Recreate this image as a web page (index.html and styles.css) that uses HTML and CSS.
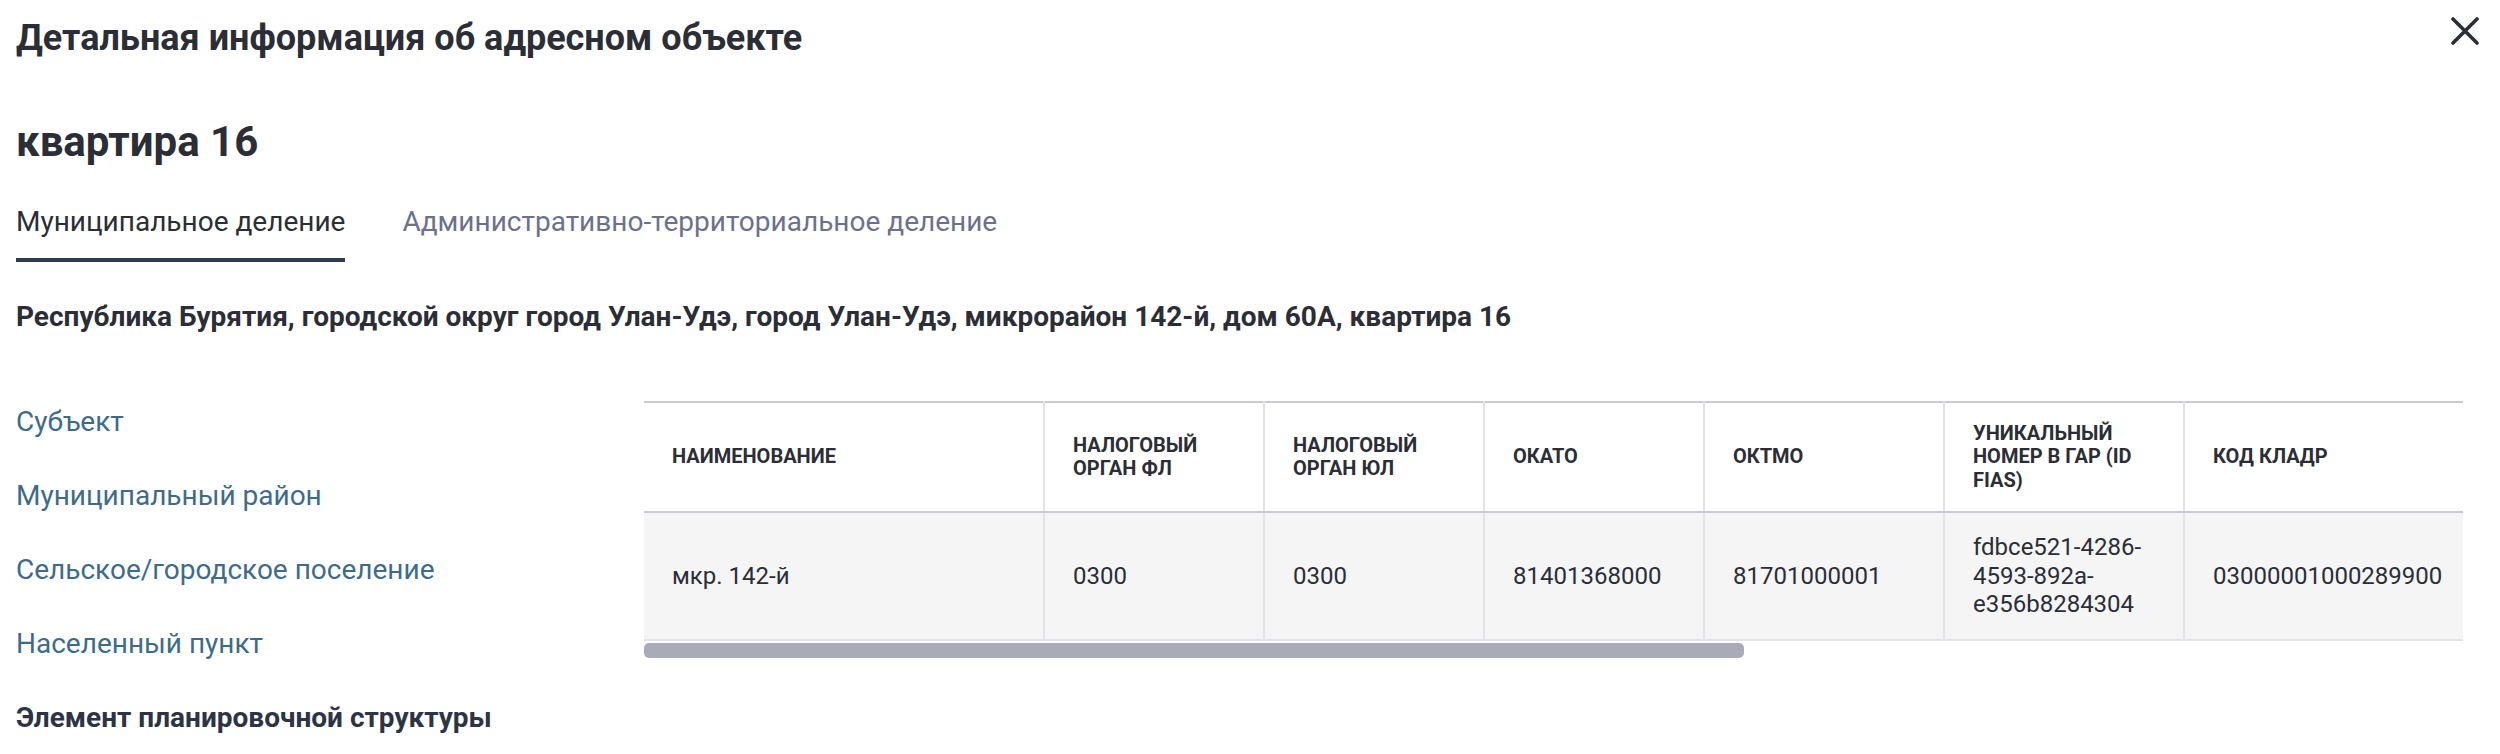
FILE: index.html
```html
<!DOCTYPE html>
<html lang="ru">
<head>
<meta charset="utf-8">
<title>Детальная информация об адресном объекте</title>
<link rel="stylesheet" href="styles.css">
</head>
<body>
<div class="page">
  <header class="header">
    <h1 class="title">Детальная информация об адресном объекте</h1>
    <button class="close" type="button" aria-label="Закрыть">
      <svg width="28" height="28" viewBox="0 0 28 28"><path d="M2 2 L26 26 M26 2 L2 26" stroke="#2b2e36" stroke-width="3.6" stroke-linecap="round" fill="none"/></svg>
    </button>
  </header>

  <h2 class="object-name">квартира 16</h2>

  <div class="tabs">
    <div class="tab tab-active">Муниципальное деление</div>
    <div class="tab">Административно-территориальное деление</div>
  </div>

  <p class="address">Республика Бурятия, городской округ город Улан-Удэ, город Улан-Удэ, микрорайон 142-й, дом 60А, квартира 16</p>

  <div class="content">
    <nav class="levels">
      <div class="level">Субъект</div>
      <div class="level">Муниципальный район</div>
      <div class="level">Сельское/городское поселение</div>
      <div class="level">Населенный пункт</div>
      <div class="level level-active">Элемент планировочной структуры</div>
    </nav>

    <div class="table-area">
      <div class="table-scroll">
        <table class="data">
          <colgroup>
            <col class="c-name"><col class="c-sm"><col class="c-sm"><col class="c-sm"><col class="c-md"><col class="c-md"><col class="c-lg">
          </colgroup>
          <thead>
            <tr>
              <th>Наименование</th>
              <th>Налоговый<br>орган ФЛ</th>
              <th>Налоговый<br>орган ЮЛ</th>
              <th>ОКАТО</th>
              <th>ОКТМО</th>
              <th>Уникальный<br>номер в ГАР (ID<br>FIAS)</th>
              <th>Код КЛАДР</th>
            </tr>
          </thead>
          <tbody>
            <tr>
              <td>мкр. 142-й</td>
              <td>0300</td>
              <td>0300</td>
              <td>81401368000</td>
              <td>81701000001</td>
              <td>fdbce521-4286-<br>4593-892a-<br>e356b8284304</td>
              <td>03000001000289900</td>
            </tr>
          </tbody>
        </table>
      </div>
      <div class="scrollbar"><div class="thumb" style="width:60.5%"></div></div>
    </div>
  </div>
</div>
</body>
</html>
```

FILE: styles.css
```css
* { box-sizing: border-box; }

html, body {
  margin: 0;
  padding: 0;
  background: #ffffff;
}

body {
  font-family: Roboto, "Liberation Sans", sans-serif;
  color: #2b2e36;
}

.page {
  padding: 17px 21px 0 16px;
}

.header {
  display: flex;
  justify-content: space-between;
  align-items: flex-start;
}

.title {
  margin: 0;
  font-size: 36px;
  line-height: 42px;
  font-weight: 700;
  color: #2b2e36;
}

.close {
  margin: 0;
  padding: 0;
  border: 0;
  background: none;
  width: 28px;
  height: 28px;
  display: block;
}

.close svg { display: block; }

.object-name {
  margin: 58px 0 0 0;
  font-size: 42px;
  line-height: 50px;
  font-weight: 700;
  color: #2b2e36;
}

.tabs {
  display: flex;
  gap: 57px;
  margin-top: 39px;
}

.tab {
  font-size: 28px;
  line-height: 32px;
  padding-bottom: 20px;
  border-bottom: 4px solid transparent;
  color: #6b718c;
}

.tab-active {
  color: #2b2e36;
  border-bottom-color: #2e3b52;
}

.address {
  margin: 38px 0 0 0;
  font-size: 28px;
  line-height: 34px;
  font-weight: 700;
  color: #2b2e36;
}

.content {
  display: grid;
  grid-template-columns: 628px 1fr;
  margin-top: 67px;
  margin-right: 16px;
}

.levels {
  display: flex;
  flex-direction: column;
  gap: 40px;
  padding-top: 4px;
}

.level {
  font-size: 28px;
  line-height: 34px;
  color: #3d6b8c;
}

.level-active {
  font-weight: 700;
  color: #2c3445;
}

.table-area {
  min-width: 0;
}

.table-scroll {
  overflow: hidden;
}

.data {
  border-collapse: collapse;
  table-layout: fixed;
  width: 1860px;
  border-top: 2px solid #c9cad3;
}

.c-name { width: 400px; }
.c-sm { width: 220px; }
.c-md { width: 240px; }
.c-lg { width: 320px; }

.data th,
.data td {
  text-align: left;
  vertical-align: middle;
  padding: 19px 28px;
  border-left: 2px solid #e2e3e8;
}

.data th:first-child,
.data td:first-child {
  border-left: 0;
}

.data th {
  font-size: 20px;
  line-height: 23.4px;
  font-weight: 700;
  text-transform: uppercase;
  color: #2b2e36;
  border-bottom: 2px solid #c9cad3;
}

.data td {
  font-size: 24px;
  line-height: 28.5px;
  font-weight: 400;
  color: #2b2e36;
  background: #f5f5f6;
  padding-top: 20px;
  padding-bottom: 20px;
  border-bottom: 2px solid #e2e3e8;
}

.scrollbar {
  margin-top: 2px;
  height: 15px;
}

.thumb {
  height: 15px;
  background: #a9abb9;
  border-radius: 5px;
}
```
